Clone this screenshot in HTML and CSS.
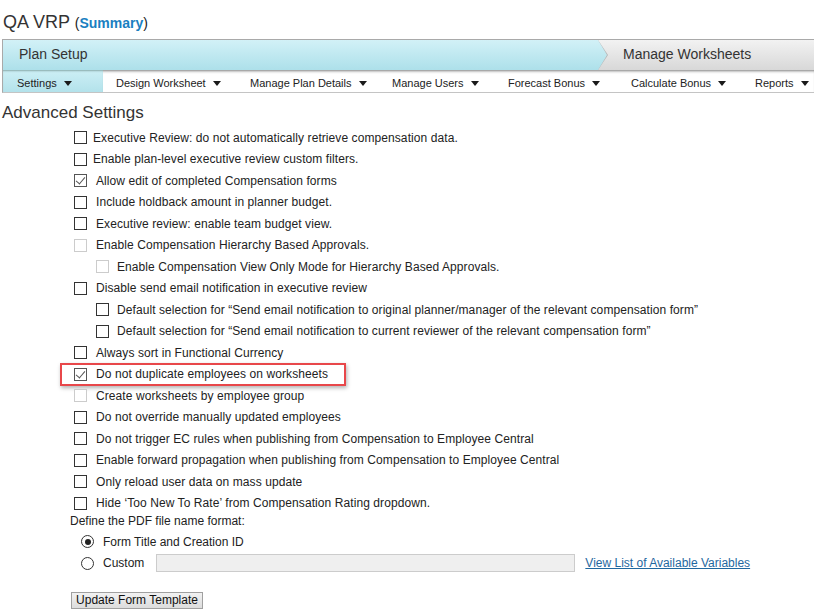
FILE: index.html
```html
<!DOCTYPE html>
<html>
<head>
<meta charset="utf-8">
<link rel="stylesheet" href="styles.css">
</head>
<body>
<div class="title">QA VRP <span class="paren">(<a class="sum" href="#">Summary</a>)</span></div>
<div class="steps">
  <div class="step active">Plan Setup</div>
  <div class="step rest">Manage Worksheets</div>
</div>
<div class="subnav">
  <div class="item sel">Settings <i class="tri"></i></div>
  <div class="item w134">Design Worksheet <i class="tri"></i></div>
  <div class="item w142">Manage Plan Details <i class="tri"></i></div>
  <div class="item w116">Manage Users <i class="tri"></i></div>
  <div class="item w123">Forecast Bonus <i class="tri"></i></div>
  <div class="item w124">Calculate Bonus <i class="tri"></i></div>
  <div class="item">Reports <i class="tri"></i></div>
</div>
<h2 class="heading">Advanced Settings</h2>
<div class="opts">
  <div class="row"><span class="cb"></span><span class="lbl">Executive Review: do not automatically retrieve compensation data.</span></div>
  <div class="row"><span class="cb"></span><span class="lbl">Enable plan-level executive review custom filters.</span></div>
  <div class="row"><span class="cb on"></span><span class="lbl sp">Allow edit of completed Compensation forms</span></div>
  <div class="row"><span class="cb"></span><span class="lbl sp">Include holdback amount in planner budget.</span></div>
  <div class="row"><span class="cb"></span><span class="lbl sp">Executive review: enable team budget view.</span></div>
  <div class="row"><span class="cb dis"></span><span class="lbl sp">Enable Compensation Hierarchy Based Approvals.</span></div>
  <div class="row sub"><span class="cb dis"></span><span class="lbl">Enable Compensation View Only Mode for Hierarchy Based Approvals.</span></div>
  <div class="row"><span class="cb"></span><span class="lbl sp">Disable send email notification in executive review</span></div>
  <div class="row sub"><span class="cb"></span><span class="lbl">Default selection for “Send email notification to original planner/manager of the relevant compensation form”</span></div>
  <div class="row sub"><span class="cb"></span><span class="lbl">Default selection for “Send email notification to current reviewer of the relevant compensation form”</span></div>
  <div class="row"><span class="cb"></span><span class="lbl sp">Always sort in Functional Currency</span></div>
  <div class="row hl"><span class="cb on"></span><span class="lbl sp">Do not duplicate employees on worksheets</span><span class="box"></span></div>
  <div class="row"><span class="cb dis"></span><span class="lbl sp">Create worksheets by employee group</span></div>
  <div class="row"><span class="cb"></span><span class="lbl sp">Do not override manually updated employees</span></div>
  <div class="row"><span class="cb"></span><span class="lbl sp">Do not trigger EC rules when publishing from Compensation to Employee Central</span></div>
  <div class="row"><span class="cb"></span><span class="lbl sp">Enable forward propagation when publishing from Compensation to Employee Central</span></div>
  <div class="row"><span class="cb"></span><span class="lbl sp">Only reload user data on mass update</span></div>
  <div class="row"><span class="cb"></span><span class="lbl sp">Hide ‘Too New To Rate’ from Compensation Rating dropdown.</span></div>
</div>
<div class="pdf">
  <div class="pdf-title">Define the PDF file name format:</div>
  <div class="radio-row"><span class="rb on"></span><span class="lbl">Form Title and Creation ID</span></div>
  <div class="radio-row"><span class="rb"></span><span class="lbl">Custom</span><span class="inp"></span><a class="link" href="#">View List of Available Variables</a></div>
  <button class="btn">Update Form Template</button>
</div>
</body>
</html>
```
FILE: styles.css
```css
* { box-sizing: border-box; }
body {
  margin: 0;
  font-family: "Liberation Sans", Arial, sans-serif;
  color: #222;
  background: #fff;
  width: 814px;
  height: 612px;
  overflow: hidden;
}
.title {
  padding: 11px 0 0 3px;
  height: 39px;
  font-size: 18px;
  color: #333;
  line-height: 22px;
}
.paren { font-size: 14px; color: #222; }
.sum { color: #1a7fc1; font-weight: bold; text-decoration: none; font-size: 14px; }
.steps {
  display: flex;
  margin-left: 2px;
  height: 31px;
  border-top: 1px solid #a9a9a9;
  border-left: 1px solid #a9a9a9;
  background: linear-gradient(#f2f2f2, #d8d8d8);
}
.step {
  font-size: 14px;
  color: #333;
  line-height: 29px;
}
.step.active {
  width: 595px;
  padding-left: 16px;
  background: linear-gradient(#d2f1f7, #ade0ea);
  position: relative;
}
.step.active::before {
  content: "";
  position: absolute;
  right: -10px;
  top: 0;
  width: 10px;
  height: 30px;
  background: #b5b5b5;
  clip-path: polygon(0 0, 100% 50%, 0 100%);
}
.step.active::after {
  content: "";
  position: absolute;
  right: -9px;
  top: 0;
  width: 9px;
  height: 30px;
  background: linear-gradient(#d2f1f7, #ade0ea);
  clip-path: polygon(0 0, 100% 50%, 0 100%);
}
.step.rest { padding-left: 25px; }
.subnav {
  display: flex;
  margin-left: 2px;
  height: 23px;
  border-left: 1px solid #a9a9a9;
  border-bottom: 1px solid #c4c4c4;
  box-shadow: inset 0 3px 3px -2px #7a7a7a;
  font-size: 11px;
  color: #222;
}
.item {
  flex: none;
  line-height: 22px;
  padding: 2px 0 0 13px;
  white-space: nowrap;
}
.item.sel {
  width: 100px;
  padding-left: 14px;
  background: linear-gradient(#cdeff5, #b3e2eb);
  box-shadow: inset 0 2px 2px -1px #8aa;
}
.w134 { width: 134px; }
.w142 { width: 142px; }
.w116 { width: 116px; }
.w123 { width: 123px; }
.w124 { width: 124px; }
.tri {
  display: inline-block;
  width: 0; height: 0;
  border-left: 4px solid transparent;
  border-right: 4px solid transparent;
  border-top: 5px solid #1a1a1a;
  margin-left: 4px;
  vertical-align: 1px;
}
.heading {
  margin: 0;
  padding: 10px 0 0 2px;
  height: 34px;
  font-size: 17px;
  font-weight: normal;
  color: #333;
}
.opts { padding-left: 74px; font-size: 12px; color: #222; letter-spacing: 0.08px; }
.row {
  display: flex;
  align-items: center;
  height: 21.5px;
  position: relative;
}
.row.sub { padding-left: 22px; }
.cb {
  width: 13px;
  height: 13px;
  border: 1px solid #333;
  background: #fff;
  flex: none;
  position: relative;
}
.cb.dis { border-color: #ccc; }
.cb.on { border-color: #555; }
.cb.on::after {
  content: "";
  position: absolute;
  left: 3px;
  top: 0px;
  width: 4px;
  height: 8px;
  border-right: 1.5px solid #555;
  border-bottom: 1.5px solid #555;
  transform: rotate(40deg);
}
.lbl { margin-left: 6px; white-space: nowrap; }
.lbl.sp { margin-left: 9px; }
.row.sub .lbl { margin-left: 8px; }
.box {
  position: absolute;
  left: -14px;
  top: -1px;
  width: 286px;
  height: 23px;
  border: 2px solid #e8474a;
  box-shadow: 1px 2px 4px rgba(0,0,0,0.3);
}
.pdf { padding-left: 70px; font-size: 12px; margin-top: -3px; }
.pdf-title { height: 20px; line-height: 20px; }
.radio-row {
  display: flex;
  align-items: center;
  height: 21.5px;
  padding-left: 11px;
}
.rb {
  width: 13px; height: 13px;
  border: 1px solid #333;
  border-radius: 50%;
  position: relative;
  flex: none;
  background: #fff;
}
.rb.on::after {
  content: "";
  position: absolute;
  left: 2.5px; top: 2.5px;
  width: 6px; height: 6px;
  border-radius: 50%;
  background: #222;
}
.radio-row .lbl { margin-left: 9px; }
.inp {
  width: 419px;
  height: 18px;
  margin-left: 12px;
  background: #efefef;
  border: 1px solid #ccc;
}
.link {
  margin-left: 10px;
  color: #1f68a0;
  text-decoration: underline;
}
.btn {
  display: block;
  margin: 18px 0 0 1px;
  width: 132px;
  height: 17px;
  padding: 0;
  font-family: "Liberation Sans", Arial, sans-serif;
  font-size: 12px;
  color: #111;
  background: linear-gradient(#f2f2f2, #dcdcdc);
  border: 1px solid #a0a0a0;
  line-height: 15px;
}
```
